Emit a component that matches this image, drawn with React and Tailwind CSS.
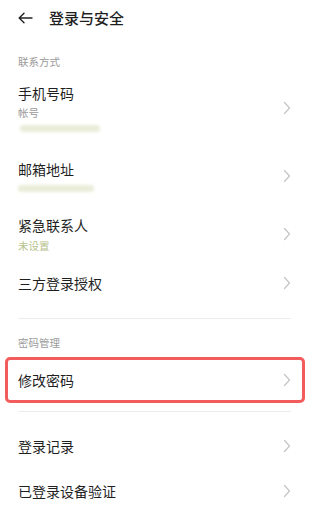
import React from 'react';

const font = { fontFamily: '"Noto Sans CJK SC", "Noto Sans", sans-serif' };

function Chevron() {
  return (
    <svg width="8" height="14" viewBox="0 0 8 14" fill="none" className="shrink-0">
      <path d="M1.5 1.5 L6.5 7 L1.5 12.5" stroke="#c4c4c4" strokeWidth="1.2" strokeLinecap="round" strokeLinejoin="round" />
    </svg>
  );
}

function Blur({ w }) {
  return <div className={`h-[7px] ${w} bg-[#e9edd9] rounded-sm blur-[1.5px]`} />;
}

export default function App() {
  return (
    <div className="w-[312px] h-[506px] bg-white overflow-hidden text-[#1f1f1f]" style={font}>
      <div className="pl-[18px] pr-[21px]">
        {/* header */}
        <div className="h-[36px] flex items-center">
          <svg width="15" height="12" viewBox="0 0 15 12" fill="none">
            <path d="M14 6 H1.5 M6 1.2 L1.2 6 L6 10.8" stroke="#222" strokeWidth="1.4" strokeLinecap="round" strokeLinejoin="round" />
          </svg>
          <span className="ml-[16px] text-[15px] font-medium leading-[20px]">登录与安全</span>
        </div>

        <div className="mt-[19px] text-[10.5px] leading-[14px] text-[#9a9a9a]">联系方式</div>

        {/* 手机号码 */}
        <div className="mt-[14px] flex items-center justify-between">
          <div>
            <div className="text-[14px] leading-[20px]">手机号码</div>
            <div className="mt-[3px] text-[10.5px] leading-[14px] text-[#9a9a9a]">帐号</div>
            <div className="mt-[5px] pl-[2px]"><Blur w="w-[80px]" /></div>
          </div>
          <Chevron />
        </div>

        {/* 邮箱地址 */}
        <div className="mt-[27px] flex items-center justify-between">
          <div>
            <div className="text-[14px] leading-[20px]">邮箱地址</div>
            <div className="mt-[6px]"><Blur w="w-[76px]" /></div>
          </div>
          <Chevron />
        </div>

        {/* 紧急联系人 */}
        <div className="mt-[23px] flex items-center justify-between">
          <div>
            <div className="text-[14px] leading-[20px]">紧急联系人</div>
            <div className="mt-[4px] text-[10.5px] leading-[14px] text-[#b6c28c]">未设置</div>
          </div>
          <Chevron />
        </div>

        {/* 三方登录授权 */}
        <div className="mt-[20px] h-[20px] flex items-center justify-between">
          <div className="text-[14px] leading-[20px]">三方登录授权</div>
          <Chevron />
        </div>

        <div className="mt-[25px] h-px bg-[#ececec]" />

        <div className="mt-[17px] text-[10.5px] leading-[14px] text-[#9a9a9a]">密码管理</div>

        {/* 修改密码 highlighted */}
        <div className="mt-[7px] -ml-[13px] -mr-[14px] h-[46px] border-[3px] border-[#f35c5c] rounded-[5px] pl-[10px] pr-[11px] flex items-center justify-between">
          <div className="text-[14px] leading-[20px]">修改密码</div>
          <Chevron />
        </div>

        <div className="mt-[8px] h-px bg-[#ececec]" />

        <div className="mt-[24px] h-[20px] flex items-center justify-between">
          <div className="text-[14px] leading-[20px]">登录记录</div>
          <Chevron />
        </div>

        <div className="mt-[25px] h-[20px] flex items-center justify-between">
          <div className="text-[14px] leading-[20px]">已登录设备验证</div>
          <Chevron />
        </div>
      </div>
    </div>
  );
}
